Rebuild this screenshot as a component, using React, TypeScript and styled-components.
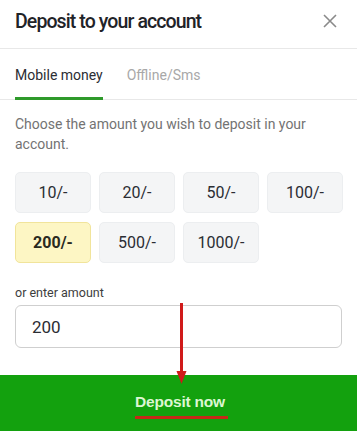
import { useState } from 'react';
import styled, { createGlobalStyle } from 'styled-components';

const GlobalStyle = createGlobalStyle`
  body {
    margin: 0;
    background: #ffffff;
    font-family: Roboto, 'Liberation Sans', Arial, sans-serif;
  }
`;

const StyledModal = styled.div`
  width: 357px;
  height: 439px;
  position: relative;
  background: #ffffff;
  box-sizing: border-box;
  padding-bottom: 8px;
  display: flex;
  flex-direction: column;
`;

const StyledHeader = styled.div`
  height: 49px;
  box-sizing: border-box;
  padding: 0 15px 5px;
  display: flex;
  align-items: center;
  justify-content: space-between;
  border-bottom: 1px solid #e8e8e8;
`;

const StyledTitle = styled.h2`
  margin: 0;
  font-size: 19.5px;
  font-weight: 500;
  letter-spacing: -0.9px;
  color: #1f2328;
`;

const StyledClose = styled.button`
  border: 0;
  background: none;
  padding: 0;
  margin-right: 4px;
  width: 16px;
  height: 16px;
  display: flex;
  align-items: center;
  justify-content: center;
  cursor: pointer;
`;

const StyledTabs = styled.div`
  height: 52px;
  box-sizing: border-box;
  padding: 0 15px;
  display: flex;
  gap: 24px;
  border-bottom: 1px solid #e8e8e8;
`;

const StyledTab = styled.button<{ $active?: boolean }>`
  border: 0;
  background: none;
  padding: 0;
  font-family: inherit;
  font-size: 14px;
  color: ${({ $active }) => ($active ? '#2b2d33' : '#a8a8a8')};
  border-bottom: 3px solid ${({ $active }) => ($active ? '#2e9a2a' : 'transparent')};
  margin-bottom: -1px;
  padding-top: 3px;
  cursor: pointer;
`;

const StyledBody = styled.div`
  padding: 14px 15px 0;
`;

const StyledText = styled.p`
  margin: 0 0 18px;
  font-size: 14px;
  line-height: 20px;
  color: #737373;
`;

const StyledGrid = styled.div`
  display: grid;
  grid-template-columns: repeat(4, 76px);
  grid-auto-rows: 41px;
  column-gap: 8px;
  row-gap: 9px;
`;

const StyledAmount = styled.button<{ $active?: boolean }>`
  font-family: inherit;
  font-size: 16px;
  font-weight: ${({ $active }) => ($active ? 700 : 400)};
  color: ${({ $active }) => ($active ? '#2a2a20' : '#2b2d33')};
  background: ${({ $active }) => ($active ? '#fdf6c4' : '#f4f5f6')};
  border: 1px solid ${({ $active }) => ($active ? '#f1e49b' : '#eceef0')};
  border-radius: 5px;
  cursor: pointer;
`;

const StyledLabel = styled.label`
  display: block;
  margin: 22px 0 5px;
  font-size: 12.5px;
  color: #3d3d3d;
`;

const StyledInput = styled.input`
  display: block;
  width: 100%;
  height: 43px;
  box-sizing: border-box;
  border: 1px solid #cfcfcf;
  border-radius: 6px;
  padding: 0 16px;
  font-family: inherit;
  font-size: 17px;
  color: #2b2d33;
  outline: none;
`;

const StyledSubmit = styled.button`
  margin-top: 27px;
  height: 56px;
  width: 100%;
  border: 0;
  background: #13a10e;
  display: flex;
  align-items: center;
  justify-content: center;
  cursor: pointer;
`;

const StyledSubmitText = styled.span`
  position: relative;
  font-family: inherit;
  font-size: 15.5px;
  font-weight: 700;
  letter-spacing: -0.2px;
  color: #dcf7d2;
  padding-bottom: 2px;
  margin-left: 3px;

  &::after {
    content: '';
    position: absolute;
    left: 0;
    right: -3px;
    bottom: -6px;
    height: 3px;
    background: #c52a17;
  }
`;

const StyledArrow = styled.svg`
  position: absolute;
  left: 176px;
  top: 303px;
  pointer-events: none;
`;

const amounts = [10, 20, 50, 100, 200, 500, 1000];

export default function App() {
  const [value, setValue] = useState('200');

  return (
    <>
      <GlobalStyle />
      <StyledModal>
        <StyledHeader>
          <StyledTitle>Deposit to your account</StyledTitle>
          <StyledClose aria-label="Close">
            <svg width="14" height="14" viewBox="0 0 14 14">
              <path d="M1 1 L13 13 M13 1 L1 13" stroke="#8a8a8a" strokeWidth="1.6" />
            </svg>
          </StyledClose>
        </StyledHeader>
        <StyledTabs>
          <StyledTab $active>Mobile money</StyledTab>
          <StyledTab>Offline/Sms</StyledTab>
        </StyledTabs>
        <StyledBody>
          <StyledText>Choose the amount you wish to deposit in your account.</StyledText>
          <StyledGrid>
            {amounts.map((a) => (
              <StyledAmount key={a} $active={String(a) === value} onClick={() => setValue(String(a))}>
                {a}/-
              </StyledAmount>
            ))}
          </StyledGrid>
          <StyledLabel htmlFor="amount">or enter amount</StyledLabel>
          <StyledInput id="amount" value={value} onChange={(e) => setValue(e.target.value)} />
        </StyledBody>
        <StyledSubmit>
          <StyledSubmitText>Deposit now</StyledSubmitText>
        </StyledSubmit>
        <StyledArrow width="11" height="82" viewBox="0 0 11 82">
          <path d="M5.5 0 V70" stroke="#d01a1a" strokeWidth="3" />
          <path d="M0.5 68 L10.5 68 L5.5 81 Z" fill="#d01a1a" />
        </StyledArrow>
      </StyledModal>
    </>
  );
}
